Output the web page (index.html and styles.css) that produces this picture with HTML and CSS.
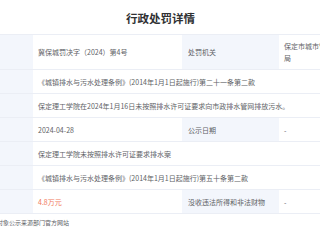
FILE: index.html
```html
<!DOCTYPE html>
<html lang="zh">
<head>
<meta charset="utf-8">
<link rel="stylesheet" href="styles.css">
</head>
<body>
<div class="page">
  <h1 class="title">行政处罚详情</h1>
  <table class="detail">
    <colgroup>
      <col class="c-label"><col class="c-value"><col class="c-label"><col class="c-value2">
    </colgroup>
    <tr class="tall">
      <th></th>
      <td>冀保城罚决字（2024）第4号</td>
      <th>处罚机关</th>
      <td>保定市城市管理综合行政执法局</td>
    </tr>
    <tr>
      <th></th>
      <td colspan="3">《城镇排水与污水处理条例》(2014年1月1日起施行)第二十一条第二款</td>
    </tr>
    <tr>
      <th></th>
      <td colspan="3">保定理工学院在2024年1月16日未按照排水许可证要求向市政排水管网排放污水。</td>
    </tr>
    <tr>
      <th></th>
      <td>2024-04-28</td>
      <th>公示日期</th>
      <td>-</td>
    </tr>
    <tr>
      <th></th>
      <td colspan="3">保定理工学院未按照排水许可证要求排水案</td>
    </tr>
    <tr>
      <th></th>
      <td colspan="3">《城镇排水与污水处理条例》(2014年1月1日起施行)第五十条第二款</td>
    </tr>
    <tr>
      <th></th>
      <td class="money">4.8万元</td>
      <th>没收违法所得和非法财物</th>
      <td>-</td>
    </tr>
  </table>
  <p class="source">数据来源：行政处罚对象公示来源部门官方网站</p>
</div>
</body>
</html>
```

FILE: styles.css
```css
html, body {
  margin: 0;
  padding: 0;
  background: #ffffff;
  overflow: hidden;
}
body {
  width: 320px;
  height: 240px;
  font-family: "Noto Sans CJK SC", "Noto Sans", sans-serif;
}
.page {
  width: 449px;
  margin-left: -64px;
}
.title {
  margin: 0;
  padding-top: 11px;
  height: 14px;
  line-height: 14px;
  margin-bottom: 9px;
  font-size: 11.5px;
  font-weight: bold;
  color: #303133;
  text-align: center;
}
.detail {
  width: 449px;
  table-layout: fixed;
  border-collapse: collapse;
  border-top: 1px solid #ebeef5;
  font-size: 7px;
  line-height: 12px;
  color: #606266;
}
.c-label { width: 97px; }
.c-value { width: 149px; }
.c-value2 { width: 106px; }
.detail th,
.detail td {
  padding: 5.5px 5px;
  border-bottom: 1px solid #ebeef5;
  text-align: left;
  vertical-align: middle;
  font-weight: normal;
  white-space: normal;
}
.detail th {
  background: #f3f6fc;
  padding-left: 6px;
}
.detail td {
  padding-left: 5px;
}
.detail tr.tall th,
.detail tr.tall td {
  padding-top: 5px;
  padding-bottom: 5px;
}
.detail .money {
  color: #f0785c;
}
.source {
  margin: 0;
  padding: 5px 0 0 7px;
  font-size: 6px;
  line-height: 8px;
  color: #606266;
}
```
